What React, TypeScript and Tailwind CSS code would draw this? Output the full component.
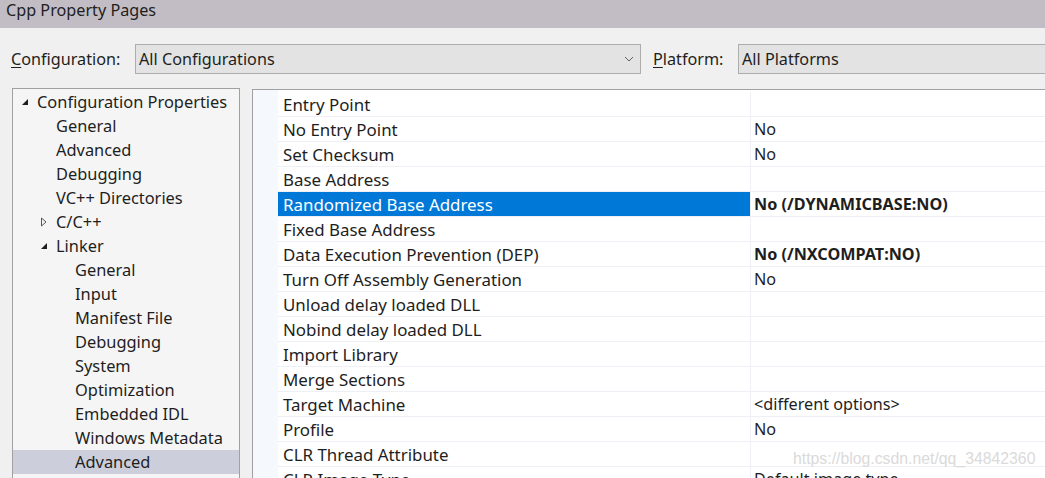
import React from "react";

const tree: { label: string; indent: number; icon?: "open" | "closed"; selected?: boolean }[] = [
  { label: "Configuration Properties", indent: 0, icon: "open" },
  { label: "General", indent: 1 },
  { label: "Advanced", indent: 1 },
  { label: "Debugging", indent: 1 },
  { label: "VC++ Directories", indent: 1 },
  { label: "C/C++", indent: 1, icon: "closed" },
  { label: "Linker", indent: 1, icon: "open" },
  { label: "General", indent: 2 },
  { label: "Input", indent: 2 },
  { label: "Manifest File", indent: 2 },
  { label: "Debugging", indent: 2 },
  { label: "System", indent: 2 },
  { label: "Optimization", indent: 2 },
  { label: "Embedded IDL", indent: 2 },
  { label: "Windows Metadata", indent: 2 },
  { label: "Advanced", indent: 2, selected: true },
];

const rows: { name: string; value: string; bold?: boolean; selected?: boolean }[] = [
  { name: "Entry Point", value: "" },
  { name: "No Entry Point", value: "No" },
  { name: "Set Checksum", value: "No" },
  { name: "Base Address", value: "" },
  { name: "Randomized Base Address", value: "No (/DYNAMICBASE:NO)", bold: true, selected: true },
  { name: "Fixed Base Address", value: "" },
  { name: "Data Execution Prevention (DEP)", value: "No (/NXCOMPAT:NO)", bold: true },
  { name: "Turn Off Assembly Generation", value: "No" },
  { name: "Unload delay loaded DLL", value: "" },
  { name: "Nobind delay loaded DLL", value: "" },
  { name: "Import Library", value: "" },
  { name: "Merge Sections", value: "" },
  { name: "Target Machine", value: "<different options>" },
  { name: "Profile", value: "No" },
  { name: "CLR Thread Attribute", value: "" },
  { name: "CLR Image Type", value: "Default image type" },
];

function OpenTri() {
  return (
    <svg width="8" height="8" viewBox="0 0 8 8">
      <path d="M7 1 L7 7 L1 7 Z" fill="#1e1e1e" />
    </svg>
  );
}

function ClosedTri() {
  return (
    <svg width="8" height="10" viewBox="0 0 8 10">
      <path d="M1.5 1 L6 5 L1.5 9 Z" fill="none" stroke="#555" strokeWidth="1" />
    </svg>
  );
}

function Chevron() {
  return (
    <svg width="10" height="6" viewBox="0 0 10 6">
      <path d="M1 1 L5 5 L9 1" fill="none" stroke="#606060" strokeWidth="1" />
    </svg>
  );
}

export default function App() {
  return (
    <div
      className="w-[1045px] h-[478px] overflow-hidden bg-[#f0f0f0] text-[#1e1e1e] flex flex-col"
      style={{ fontFamily: '"Noto Sans", sans-serif' }}
    >
      <div className="h-[28px] shrink-0 bg-[#c2bdc4] pl-[6px] text-[16.2px] leading-[20px]">
        Cpp Property Pages
      </div>
      <div className="h-[16px] shrink-0" />
      <div className="flex items-center h-[30px] shrink-0 text-[16.2px]">
        <div className="w-[135px] pl-[11px]">
          <span className="underline underline-offset-2">C</span>onfiguration:
        </div>
        <div className="w-[506px] h-[30px] bg-[#e3e3e3] border border-[#adadad] flex items-center justify-between pl-[3px] pr-[6px]">
          <span>All Configurations</span>
          <Chevron />
        </div>
        <div className="w-[97px] pl-[12px]">
          <span className="underline underline-offset-2">P</span>latform:
        </div>
        <div className="flex-1 h-[30px] bg-[#e3e3e3] border border-[#adadad] border-r-0 flex items-center pl-[3px]">
          All Platforms
        </div>
      </div>
      <div className="h-[14px] shrink-0" />
      <div className="flex flex-1 min-h-0 pl-[12px]">
        <div className="w-[228px] shrink-0 border-l border-t border-r border-[#a0a0a0] bg-[#f5f5f5] pt-[1px] text-[16.4px]">
          {tree.map((t, i) => (
            <div
              key={i}
              className={"h-[24px] flex items-center " + (t.selected ? "bg-[#cccedb]" : "")}
            >
              <div
                className={
                  t.indent === 0
                    ? "w-[24px] flex justify-end pr-[8px]"
                    : t.indent === 1
                    ? "w-[43px] flex justify-end pr-[8px]"
                    : "w-[62px] flex justify-end pr-[8px]"
                }
              >
                {t.icon === "open" ? <OpenTri /> : t.icon === "closed" ? <ClosedTri /> : null}
              </div>
              <span className="leading-[24px]">{t.label}</span>
            </div>
          ))}
        </div>
        <div className="w-[12px] shrink-0" />
        <div className="flex-1 mt-[1px] border-l border-t border-[#a0a0a0] bg-white flex relative">
          <div className="w-[25px] shrink-0 bg-[#f5f8fc]" />
          <div className="flex-1 pt-[2px]">
            {rows.map((r, i) => (
              <div key={i} className="h-[25px] flex border-b border-[#eef0f5]">
                <div
                  className={
                    "w-[472px] shrink-0 pl-[5px] pt-[1px] leading-[23px] text-[16.9px] whitespace-nowrap " +
                    (r.selected ? "bg-[#0078d7] text-white" : "")
                  }
                >
                  {r.name}
                </div>
                <div
                  className={
                    "flex-1 border-l border-[#eef0f5] pl-[3px] leading-[24px] text-[16.2px] whitespace-nowrap " +
                    (r.bold ? "font-bold" : "")
                  }
                >
                  {r.value}
                </div>
              </div>
            ))}
          </div>
          <div
            className="absolute left-[540px] top-[360px] text-[15.8px] leading-[18px] text-[#dadada] whitespace-nowrap"
            style={{ fontFamily: '"Liberation Sans", sans-serif' }}
          >
            https://blog.csdn.net/qq_34842360
          </div>
        </div>
      </div>
    </div>
  );
}
